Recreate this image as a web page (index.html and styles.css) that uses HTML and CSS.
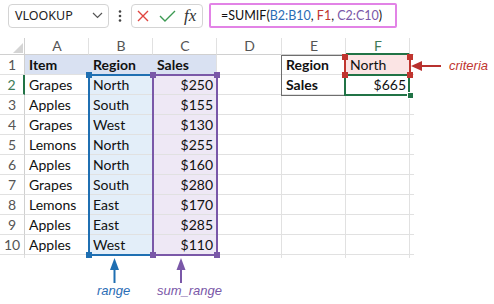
FILE: index.html
```html
<html>
    <head>
        <title>SUMIF</title>
        <link rel="stylesheet" href="styles.css">
    </head>

    <body>
        <div class="bar">
            <div class="nameBox">
                <span>VLOOKUP</span>
                <svg width="11" height="7" viewBox="0 0 11 7"><path d="M1 1 L5.5 5.5 L10 1" fill="none" stroke="#555" stroke-width="1.2"/></svg>
            </div>
            <div class="dots">
                <svg width="4" height="12" viewBox="0 0 4 12"><circle cx="2" cy="1.5" r="1.3" fill="#444"/><circle cx="2" cy="6" r="1.3" fill="#444"/><circle cx="2" cy="10.5" r="1.3" fill="#444"/></svg>
            </div>
            <div class="fxBox">
                <svg class="cancel" width="12" height="12" viewBox="0 0 12 12"><path d="M1 1 L11 11 M11 1 L1 11" stroke="#e0453f" stroke-width="1.4" fill="none"/></svg>
                <svg class="enter" width="17" height="12" viewBox="0 0 17 12"><path d="M1 6 L6 11 L16 1" stroke="#3c9a53" stroke-width="1.4" fill="none"/></svg>
                <span class="fx">fx</span>
            </div>
            <div class="formula">=SUMIF(<span class="refB">B2:B10</span>, <span class="refF">F1</span>, <span class="refC">C2:C10</span>)</div>
        </div>

        <div class="sheet">
            <div class="grid">
                <!-- column headers -->
                <div class="cell corner"><svg width="10" height="10" viewBox="0 0 10 10"><polygon points="10,0 10,10 0,10" fill="#d4d4d4"/></svg></div>
                <div class="cell colHead">A</div>
                <div class="cell colHead">B</div>
                <div class="cell colHead">C</div>
                <div class="cell colHead">D</div>
                <div class="cell colHead">E</div>
                <div class="cell colHead active">F</div>
                <div class="cell stubCol"></div>

                <div class="cell rowHead">1</div>
                <div class="cell bold headFill">Item</div>
                <div class="cell bold headFill">Region</div>
                <div class="cell bold headFill last">Sales</div>
                <div class="cell"></div>
                <div class="cell bold">Region</div>
                <div class="cell critFill">North</div>
                <div class="cell stubCol"></div>

                <div class="cell rowHead active">2</div>
                <div class="cell">Grapes</div>
                <div class="cell rangeFill">North</div>
                <div class="cell sumFill num">$250</div>
                <div class="cell"></div>
                <div class="cell bold">Sales</div>
                <div class="cell num">$665</div>
                <div class="cell stubCol"></div>

                <div class="cell rowHead">3</div>
                <div class="cell">Apples</div>
                <div class="cell rangeFill">South</div>
                <div class="cell sumFill num">$155</div>
                <div class="cell"></div>
                <div class="cell"></div>
                <div class="cell"></div>
                <div class="cell stubCol"></div>

                <div class="cell rowHead">4</div>
                <div class="cell">Grapes</div>
                <div class="cell rangeFill">West</div>
                <div class="cell sumFill num">$130</div>
                <div class="cell"></div>
                <div class="cell"></div>
                <div class="cell"></div>
                <div class="cell stubCol"></div>

                <div class="cell rowHead">5</div>
                <div class="cell">Lemons</div>
                <div class="cell rangeFill">North</div>
                <div class="cell sumFill num">$255</div>
                <div class="cell"></div>
                <div class="cell"></div>
                <div class="cell"></div>
                <div class="cell stubCol"></div>

                <div class="cell rowHead">6</div>
                <div class="cell">Apples</div>
                <div class="cell rangeFill">North</div>
                <div class="cell sumFill num">$160</div>
                <div class="cell"></div>
                <div class="cell"></div>
                <div class="cell"></div>
                <div class="cell stubCol"></div>

                <div class="cell rowHead">7</div>
                <div class="cell">Grapes</div>
                <div class="cell rangeFill">South</div>
                <div class="cell sumFill num">$280</div>
                <div class="cell"></div>
                <div class="cell"></div>
                <div class="cell"></div>
                <div class="cell stubCol"></div>

                <div class="cell rowHead">8</div>
                <div class="cell">Lemons</div>
                <div class="cell rangeFill">East</div>
                <div class="cell sumFill num">$170</div>
                <div class="cell"></div>
                <div class="cell"></div>
                <div class="cell"></div>
                <div class="cell stubCol"></div>

                <div class="cell rowHead">9</div>
                <div class="cell">Apples</div>
                <div class="cell rangeFill">East</div>
                <div class="cell sumFill num">$285</div>
                <div class="cell"></div>
                <div class="cell"></div>
                <div class="cell"></div>
                <div class="cell stubCol"></div>

                <div class="cell rowHead">10</div>
                <div class="cell">Apples</div>
                <div class="cell rangeFill">West</div>
                <div class="cell sumFill num">$110</div>
                <div class="cell"></div>
                <div class="cell"></div>
                <div class="cell"></div>
                <div class="cell stubCol"></div>

                <!-- cut-off edge -->
                <div class="cell stubRow"></div>
                <div class="cell stubRow"></div>
                <div class="cell stubRow"></div>
                <div class="cell stubRow"></div>
                <div class="cell stubRow"></div>
                <div class="cell stubRow"></div>
                <div class="cell stubRow"></div>
                <div class="cell stubCorner"></div>
            </div>

            <!-- highlighted ranges drawn over the grid -->
            <div class="box rangeBox"></div>
            <div class="box sumBox"></div>
            <div class="box pairBox"></div>
            <div class="box critBox"></div>
            <div class="box activeBox"></div>

            <div class="handle blue" style="left:86px; top:34px"></div>
            <div class="handle blue" style="left:86px; top:214px"></div>
            <div class="handle purple" style="left:150px; top:34px"></div>
            <div class="handle purple" style="left:214px; top:34px"></div>
            <div class="handle purple" style="left:150px; top:214px"></div>
            <div class="handle purple" style="left:214px; top:214px"></div>
            <div class="handle red" style="left:342px; top:16px"></div>
            <div class="handle red" style="left:407px; top:16px"></div>
            <div class="handle red" style="left:342px; top:34px"></div>
            <div class="handle red" style="left:407px; top:34px"></div>
            <div class="handle green" style="left:407px; top:54px"></div>

            <div class="callout">
                <svg width="31" height="12" viewBox="0 0 31 12"><polygon points="0,6 11,1 11,11" fill="#b8312f"/><line x1="10" y1="6" x2="30" y2="6" stroke="#b8312f" stroke-width="2"/></svg>
                <span>criteria</span>
            </div>
        </div>

        <div class="notes">
            <div class="note noteRange">
                <svg width="64" height="26" viewBox="0 0 64 26"><polygon points="25.5,0 30,12 21,12" fill="#1f6fb2"/><line x1="25.5" y1="10" x2="25.5" y2="25" stroke="#1f6fb2" stroke-width="2"/></svg>
                <span>range</span>
            </div>
            <div class="note noteSum">
                <svg width="64" height="26" viewBox="0 0 64 26"><polygon points="28,0 32.5,12 23.5,12" fill="#7a58a8"/><line x1="28" y1="10" x2="28" y2="25" stroke="#7a58a8" stroke-width="2"/></svg>
                <span>sum_range</span>
            </div>
        </div>
    </body>
</html>
```

FILE: styles.css
```css
body {
    margin: 0;
    background: #fff;
    font-family: Lato, "Liberation Sans", sans-serif;
    color: #111;
}

/* formula bar */
.bar {
    display: flex;
    align-items: center;
    padding: 3px 0 0 8px;
    height: 25px;
}

.nameBox {
    width: 101px;
    height: 24px;
    box-sizing: border-box;
    border: 1px solid #d4d4d4;
    border-radius: 4px;
    display: flex;
    align-items: center;
    justify-content: space-between;
    padding: 0 5px 0 6px;
    font-family: "Noto Sans", sans-serif;
    font-size: 12.5px;
    color: #222;
}

.dots {
    width: 22px;
    display: flex;
    justify-content: center;
}

.fxBox {
    width: 72px;
    height: 24px;
    box-sizing: border-box;
    border: 1px solid #d4d4d4;
    border-radius: 4px;
    display: flex;
    align-items: center;
    padding-left: 5px;
}

.fxBox .enter {
    margin-left: 10px;
}

.fx {
    margin-left: 8px;
    font-family: "Liberation Serif", serif;
    font-style: italic;
    font-size: 17px;
    color: #333;
}

.formula {
    margin-left: 6px;
    width: 188px;
    height: 25px;
    box-sizing: border-box;
    border: 2px solid #e283e6;
    border-radius: 2px;
    padding-left: 10px;
    font-family: Lato, sans-serif;
    font-size: 12.5px;
    line-height: 21px;
    white-space: nowrap;
    overflow: hidden;
    color: #111;
}

.refB { color: #2a6db5; }
.refF { color: #c0352f; }
.refC { color: #7a58a8; }

/* sheet */
.sheet {
    position: relative;
    margin-top: 10px;
    width: max-content;
}

.grid {
    display: grid;
    grid-template-columns: 25px 64px 64px 64px 65px 64px 64px 4px;
    grid-template-rows: 17px repeat(10, 20px) 3px;
}

.cell {
    box-sizing: border-box;
    border-right: 1px solid #e1e1e1;
    border-bottom: 1px solid #e1e1e1;
    padding: 0 3px 0 4px;
    font-size: 14px;
    line-height: 20px;
    white-space: nowrap;
    overflow: hidden;
}

.corner {
    padding: 0;
    display: flex;
    align-items: flex-end;
    justify-content: flex-end;
    border-right-color: #d0d0d0;
    border-bottom-color: #d0d0d0;
}

.corner svg {
    margin: 0 1px 1px 0;
}

.colHead {
    text-align: center;
    font-size: 14px;
    line-height: 16px;
    color: #555;
    border-bottom-color: #d0d0d0;
}

.colHead.active {
    border-bottom: 2px solid #217346;
    color: #3d7a57;
}

.rowHead {
    text-align: center;
    padding: 0;
    font-size: 14px;
    color: #555;
    border-right-color: #d0d0d0;
}

.rowHead.active {
    border-right: 2px solid #217346;
    color: #3d7a57;
}

.bold { font-weight: bold; }
.num { text-align: right; }

.headFill {
    background: #d9e1f2;
    border-right-color: #d9e1f2;
}
.headFill.last { border-right-color: #e1e1e1; }

.rangeFill { background: #e3eef9; }
.sumFill { background: #eee8f5; }
.critFill { background: #fbe4e4; }

.stubCol { border-right: none; padding: 0; }
.stubRow { border-bottom: none; padding: 0; }
.stubCorner { border: none; padding: 0; }

/* overlays */
.box {
    position: absolute;
    box-sizing: border-box;
}

.rangeBox {
    left: 88px;
    top: 36px;
    width: 66px;
    height: 182px;
    border: 2px solid #1f6fb2;
}

.sumBox {
    left: 152px;
    top: 36px;
    width: 66px;
    height: 182px;
    border: 2px solid #7a58a8;
}

.pairBox {
    left: 281px;
    top: 17px;
    width: 65px;
    height: 41px;
    border: 1px solid #6e6e6e;
}

.critBox {
    left: 344px;
    top: 17px;
    width: 67px;
    height: 21px;
    border-left: 2px solid #c0352f;
    border-right: 2px solid #c0352f;
}

.activeBox {
    left: 344px;
    top: 36px;
    width: 66px;
    height: 22px;
    border: 2px solid #217346;
}

.handle {
    position: absolute;
    width: 6px;
    height: 6px;
}
.handle.blue { background: #1f6fb2; }
.handle.purple { background: #7a58a8; }
.handle.red { background: #c0352f; }
.handle.green { background: #217346; border: 1px solid #fff; box-sizing: content-box; width: 5px; height: 5px; }

.callout {
    position: absolute;
    left: 411px;
    top: 20px;
    display: flex;
    align-items: center;
    gap: 7px;
    font-family: "Liberation Sans", sans-serif;
    font-style: italic;
    font-size: 13px;
    color: #c0352f;
}

/* labels under the ranges */
.notes {
    display: grid;
    grid-template-columns: 25px 64px 64px 64px;
}

.note {
    display: flex;
    flex-direction: column;
    font-family: "Liberation Sans", sans-serif;
    font-style: italic;
    font-size: 13px;
    line-height: 14px;
    white-space: nowrap;
}

.noteRange {
    grid-column: 3;
    color: #2a6db5;
}
.noteRange span { padding-left: 8px; }

.noteSum {
    grid-column: 4;
    color: #7a58a8;
}
.noteSum span { padding-left: 4px; }
```
